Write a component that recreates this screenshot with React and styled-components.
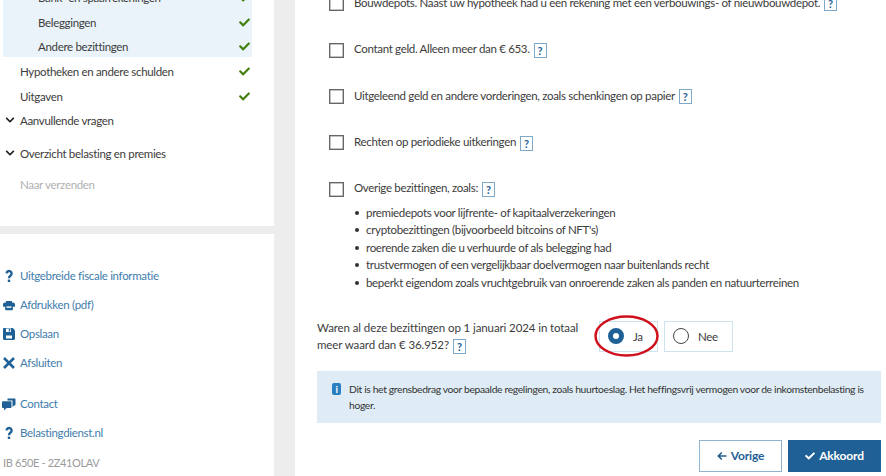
import React from "react";
import styled, { createGlobalStyle } from "styled-components";
import { FaCheck, FaChevronDown } from "react-icons/fa";

const Global = createGlobalStyle`
  html, body { margin: 0; padding: 0; height: 476px; overflow: hidden; background: #eeeded; }
  body { font-family: "Lato", "Noto Sans", sans-serif; font-size: 11.5px; letter-spacing: -0.32px; color: #3c3c3c; }
  * { box-sizing: border-box; }
`;
const Page = styled.div`
  display: grid;
  grid-template-columns: 274px 591px;
  column-gap: 21px;
  width: 886px;
  height: 476px;
  overflow: hidden;
`;
const Side = styled.aside`
  display: flex;
  flex-direction: column;
  gap: 8px;
  height: 476px;
`;
const NavPanel = styled.nav`
  background: #fff;
  height: 228px;
  padding-left: 3px;
  overflow: hidden;
`;
const SubList = styled.div`
  background: #eaf3f9;
  width: 249px;
  margin-top: -16.8px;
`;
const NavRow = styled.div`
  display: flex;
  align-items: center;
  width: 249px;
  height: ${(p) => p.$h || 24.6}px;
  padding-top: ${(p) => p.$pt ?? 4.5}px;
  padding-left: ${(p) => (p.$sub ? 35 : 17)}px;
  color: ${(p) => (p.$muted ? "#b0b0b0" : "#3c3c3c")};
  position: relative;
`;
const Label = styled.span`
  flex: 1;
`;
const Tick = styled(FaCheck)`
  color: #41800f;
  font-size: 11px;
  margin-right: 2px;
`;
const Caret = styled(FaChevronDown)`
  position: absolute;
  left: 2px;
  top: calc(50% + 2px);
  transform: translateY(-50%);
  font-size: 10px;
  color: #222;
`;
const LinkPanel = styled.div`
  background: #fff;
  flex: 1;
  padding-top: 27px;
`;
const LinkGroup = styled.div`
  margin-bottom: ${(p) => p.$gap || 0}px;
`;
const LinkRow = styled.div`
  display: flex;
  align-items: center;
  height: 29px;
  color: #3f7dab;
`;
const LinkIcon = styled.svg`
  width: 14px;
  height: 14px;
  margin: 0 4px 0 2px;
  flex: none;
  color: #1f6196;
`;
const Version = styled.div`
  padding: 0 3px;
  height: 29px;
  line-height: 31px;
  font-size: 11px;
  color: #9a9a9a;
  letter-spacing: -0.35px;
`;
const Main = styled.main`
  background: #fff;
  height: 476px;
  padding-left: 22px;
  overflow: hidden;
`;
const Checks = styled.div`
  margin-top: -19.5px;
  padding-left: 12px;
`;
const CheckRow = styled.div`
  display: flex;
  align-items: center;
  height: 46.4px;
`;
const Box = styled.span`
  width: 15px;
  height: 15px;
  border: 1px solid #666;
  box-shadow: inset 0 0 0 0.5px #888;
  margin-right: 10px;
  flex: none;
`;
const Help = styled.span`
  display: inline-flex;
  align-items: center;
  justify-content: center;
  width: 13px;
  height: 15px;
  margin-left: 4px;
  border: 1px solid #7fa9c9;
  color: #1f6196;
  font-size: 11px;
  font-weight: 700;
  background: #fff;
  vertical-align: middle;
  letter-spacing: 0;
`;
const Bullets = styled.ul`
  list-style: none;
  margin: -8.5px 0 0;
  padding: 0 0 0 25px;
`;
const Bullet = styled.li`
  height: 17.4px;
  line-height: 17.4px;
  padding-left: 12px;
  position: relative;
  &::before {
    content: "";
    position: absolute;
    left: 1px;
    top: 7px;
    width: 4px;
    height: 4px;
    border-radius: 50%;
    background: #333;
  }
`;
const Question = styled.div`
  display: flex;
  margin-top: 20.5px;
  height: 50px;
  align-items: center;
`;
const QText = styled.div`
  width: 282px;
  line-height: 17px;
  font-size: 11.5px;
  letter-spacing: -0.1px;
`;
const Radios = styled.div`
  display: flex;
  gap: 6px;
  position: relative;
`;
const Radio = styled.div`
  display: flex;
  align-items: center;
  width: ${(p) => p.$w}px;
  height: 31px;
  border: 1px solid #cfe3ef;
  padding-left: 8px;
`;
const Dot = styled.span`
  width: 16px;
  height: 16px;
  border-radius: 50%;
  margin-right: 9px;
  border: ${(p) => (p.$on ? "5px solid #1f6196" : "1px solid #444")};
  background: #fff;
`;
const Ring = styled.svg`
  position: absolute;
  left: -5px;
  top: -6px;
  width: 65px;
  height: 42px;
`;
const Info = styled.div`
  display: flex;
  margin-top: 9.5px;
  width: 564px;
  height: 52px;
  background: #dfecf5;
  padding: 10px 8px 0 15px;
  font-size: 10.3px;
  letter-spacing: -0.34px;
  line-height: 16px;
  color: #333;
`;
const InfoIcon = styled.span`
  flex: none;
  width: 9px;
  height: 12px;
  margin: 2px 8px 0 0;
  border-radius: 2px;
  background: #2a7fc0;
  color: #fff;
  font-size: 10px;
  font-weight: 700;
  line-height: 12px;
  text-align: center;
`;
const Actions = styled.div`
  display: flex;
  justify-content: flex-end;
  gap: 6px;
  width: 564px;
  margin-top: 17px;
`;
const Btn = styled.button`
  display: flex;
  align-items: center;
  justify-content: center;
  gap: 4px;
  width: ${(p) => p.$w}px;
  height: 32px;
  padding: 0;
  border: 1px solid;
  border-color: ${(p) => (p.$primary ? "#1f6196" : "#8fb3ce")};
  background: ${(p) => (p.$primary ? "#1f6196" : "#fff")};
  color: ${(p) => (p.$primary ? "#fff" : "#1f6196")};
  font: 700 12px "Lato", sans-serif;
  letter-spacing: -0.15px;
`;
const ArrowIcon = styled.svg`
  width: 10px;
  height: 10px;
`;

const HelpBtn = () => <Help>?</Help>;

const QuestionIcon = () => (
  <LinkIcon viewBox="0 0 14 14">
    <path d="M4.600 4.400A2.500 2.500 0 1 1 8.600 6.500C7.500 7.300 7 7.800 7 9.300" fill="none" stroke="currentColor" strokeWidth="2.400" />
    <rect x="5.800" y="10.600" width="2.400" height="2.400" fill="currentColor" />
  </LinkIcon>
);
const PrintIcon = () => (
  <LinkIcon viewBox="0 0 14 14">
    <path d="M3.500 4V2.200h7V4h1.200C12.900 4 14 5 14 6.400V9h-2.500v3.200a.8.8 0 0 1-.8.8H3.300a.8.8 0 0 1-.8-.8V9H0V6.400C0 5 1.100 4 2.300 4Z" fill="currentColor" transform="translate(1 1) scale(.86)" />
    <rect x="4.500" y="8.400" width="5" height="1.400" fill="#fff" />
  </LinkIcon>
);
const SaveIcon = () => (
  <LinkIcon viewBox="0 0 14 14">
    <path d="M1 2.200C1 1.500 1.500 1 2.200 1h8.600L13 3.200v8.600c0 .7-.5 1.200-1.200 1.200H2.200C1.500 13 1 12.500 1 11.800Z" fill="currentColor" />
    <rect x="4" y="1.500" width="5" height="3.500" fill="#fff" />
    <rect x="6.800" y="2" width="1.400" height="2.500" fill="currentColor" />
    <rect x="4" y="8.500" width="6" height="3" fill="#fff" />
  </LinkIcon>
);
const CloseIcon = () => (
  <LinkIcon viewBox="0 0 14 14">
    <path d="M2 2l10 10M12 2L2 12" fill="none" stroke="currentColor" strokeWidth="2.600" />
  </LinkIcon>
);
const ContactIcon = () => (
  <LinkIcon viewBox="0 0 14 14">
    <path d="M5.500 1.500h7c.6 0 1 .4 1 1v5c0 .6-.4 1-1 1h-.5L10.500 10V3.500H5.500Z" fill="currentColor" />
    <path d="M1 4.200h7.500c.6 0 1 .4 1 1V10c0 .6-.4 1-1 1H4.500L2 13.500V11H1c-.6 0-1-.4-1-1V5.200c0-.6.4-1 1-1Z" fill="currentColor" />
  </LinkIcon>
);

const bullets = [
  "premiedepots voor lijfrente- of kapitaalverzekeringen",
  "cryptobezittingen (bijvoorbeeld bitcoins of NFT's)",
  "roerende zaken die u verhuurde of als belegging had",
  "trustvermogen of een vergelijkbaar doelvermogen naar buitenlands recht",
  "beperkt eigendom zoals vruchtgebruik van onroerende zaken als panden en natuurterreinen",
];

export default function App() {
  return (
    <Page>
      <Global />
      <Side>
        <NavPanel>
          <SubList>
            <NavRow $sub><Label>Bank- en spaarrekeningen</Label><Tick /></NavRow>
            <NavRow $sub><Label>Beleggingen</Label><Tick /></NavRow>
            <NavRow $sub><Label>Andere bezittingen</Label><Tick /></NavRow>
          </SubList>
          <NavRow><Label>Hypotheken en andere schulden</Label><Tick /></NavRow>
          <NavRow><Label>Uitgaven</Label><Tick /></NavRow>
          <NavRow><Caret /><Label>Aanvullende vragen</Label></NavRow>
          <NavRow $h={40}><Caret /><Label>Overzicht belasting en premies</Label></NavRow>
          <NavRow $muted $pt={3}><Label>Naar verzenden</Label></NavRow>
        </NavPanel>
        <LinkPanel>
          <LinkGroup $gap={12}>
            <LinkRow><QuestionIcon />Uitgebreide fiscale informatie</LinkRow>
            <LinkRow><PrintIcon />Afdrukken (pdf)</LinkRow>
            <LinkRow><SaveIcon />Opslaan</LinkRow>
            <LinkRow><CloseIcon />Afsluiten</LinkRow>
          </LinkGroup>
          <LinkGroup>
            <LinkRow><ContactIcon />Contact</LinkRow>
            <LinkRow><QuestionIcon />Belastingdienst.nl</LinkRow>
          </LinkGroup>
          <Version>IB 650E - 2Z41OLAV</Version>
        </LinkPanel>
      </Side>
      <Main>
        <Checks>
          <CheckRow><Box /><span>Bouwdepots. Naast uw hypotheek had u een rekening met een verbouwings- of nieuwbouwdepot.<HelpBtn /></span></CheckRow>
          <CheckRow><Box /><span>Contant geld. Alleen meer dan € 653.<HelpBtn /></span></CheckRow>
          <CheckRow><Box /><span>Uitgeleend geld en andere vorderingen, zoals schenkingen op papier<HelpBtn /></span></CheckRow>
          <CheckRow><Box /><span>Rechten op periodieke uitkeringen<HelpBtn /></span></CheckRow>
          <CheckRow><Box /><span>Overige bezittingen, zoals:<HelpBtn /></span></CheckRow>
          <Bullets>
            {bullets.map((b) => <Bullet key={b}>{b}</Bullet>)}
          </Bullets>
        </Checks>
        <Question>
          <QText>Waren al deze bezittingen op 1 januari 2024 in totaal meer waard dan € 36.952?<HelpBtn /></QText>
          <Radios>
            <Radio $w={59}><Dot $on />Ja</Radio>
            <Radio $w={69}><Dot />Nee</Radio>
            <Ring viewBox="0 0 65 42">
              <ellipse cx="32.500" cy="21" rx="31" ry="19.500" fill="none" stroke="#d0101c" strokeWidth="2.500" />
            </Ring>
          </Radios>
        </Question>
        <Info>
          <InfoIcon>i</InfoIcon>
          <span>Dit is het grensbedrag voor bepaalde regelingen, zoals huurtoeslag. Het heffingsvrij vermogen voor de inkomstenbelasting is hoger.</span>
        </Info>
        <Actions>
          <Btn $w={83}>
            <ArrowIcon viewBox="0 0 10 10">
              <path d="M9.500 5H1.500M4.800 1.500L1.300 5l3.500 3.500" fill="none" stroke="currentColor" strokeWidth="1.600" />
            </ArrowIcon>
            Vorige
          </Btn>
          <Btn $w={93} $primary><FaCheck size={10} />Akkoord</Btn>
        </Actions>
      </Main>
    </Page>
  );
}
